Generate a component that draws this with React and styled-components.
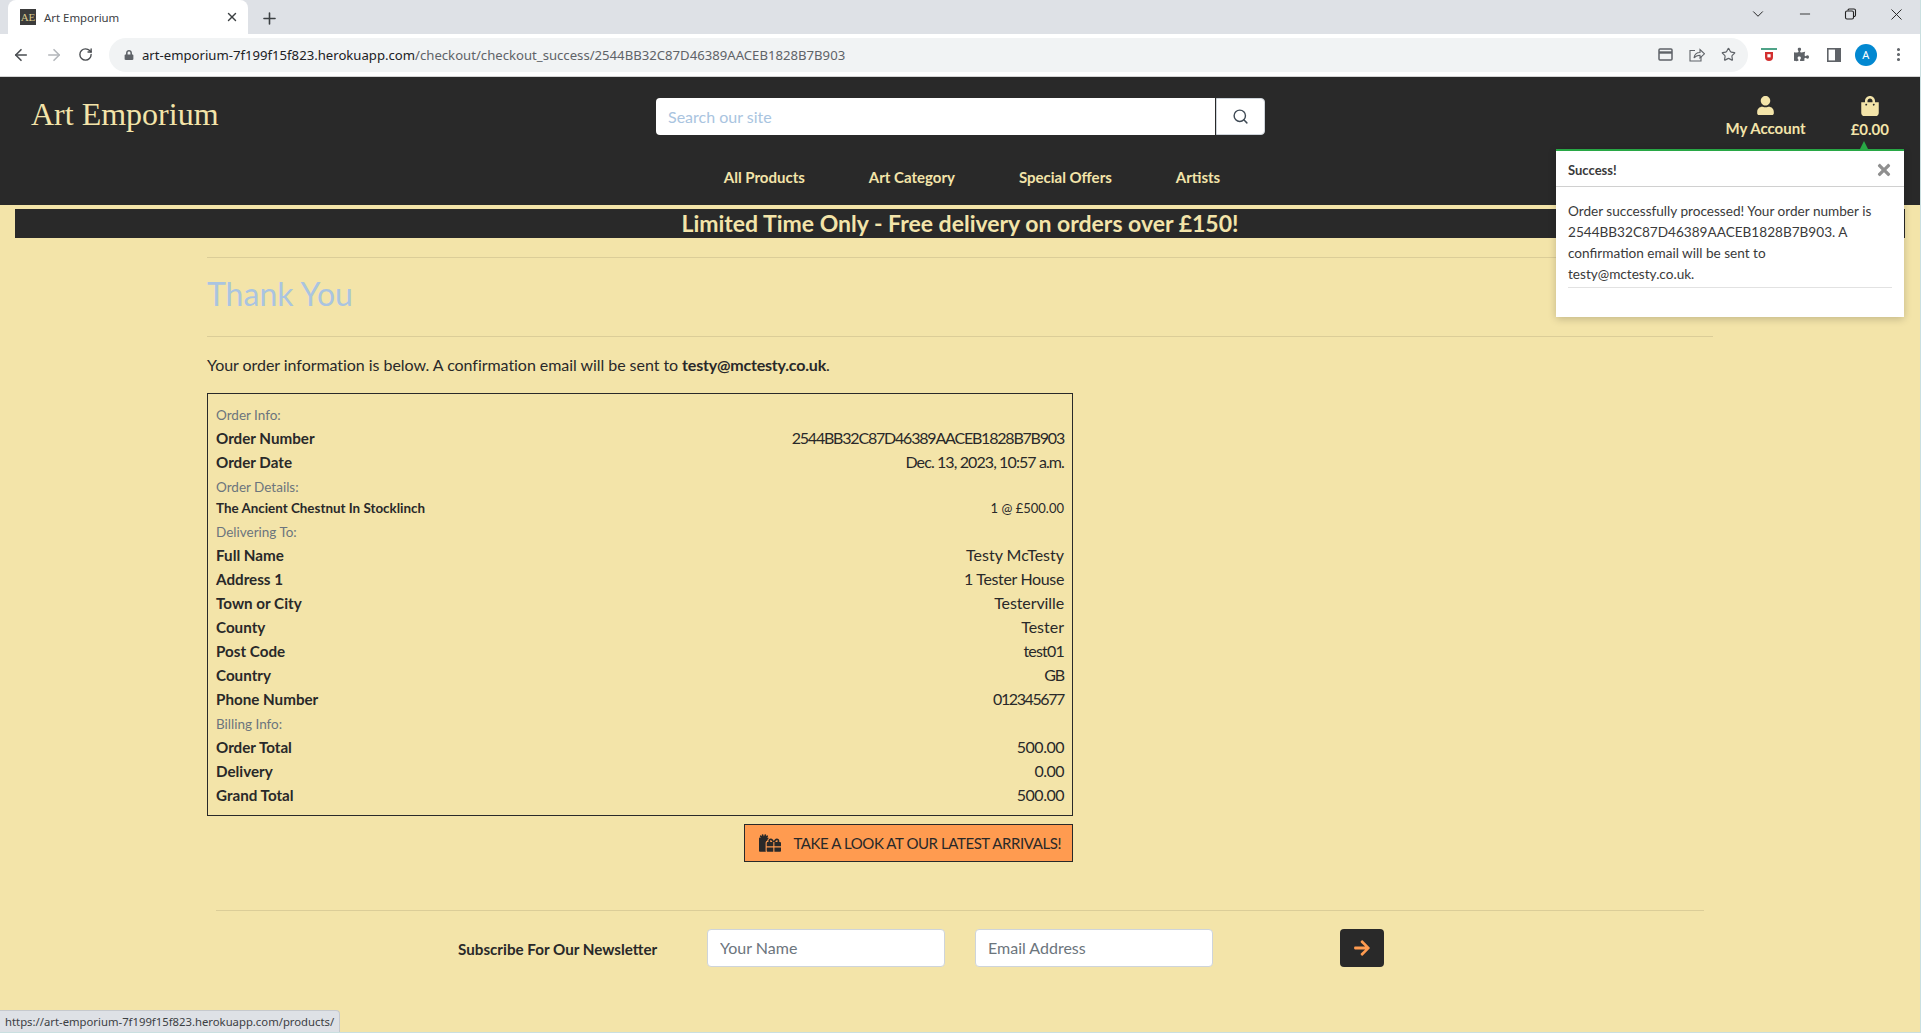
import React from 'react'
import styled, { createGlobalStyle } from 'styled-components'
import { FaUser, FaShoppingBag, FaGifts, FaArrowRight, FaPuzzlePiece, FaTimes, FaLock } from 'react-icons/fa'
import { ArrowLeft, ArrowRight, RotateCw, Plus, X, Star, ChevronDown, Minus, EllipsisVertical, Search } from 'lucide-react'

const cream = '#f3e4a9'
const dark = '#292929'
const font = `Lato, "Noto Sans", sans-serif`
const uiFont = `"Noto Sans", "Open Sans", sans-serif`

const orderInfo = [
  ['Order Number', '2544BB32C87D46389AACEB1828B7B903', -1.2],
  ['Order Date', 'Dec. 13, 2023, 10:57 a.m.', -0.9],
]
const delivery = [
  ['Full Name', 'Testy McTesty'],
  ['Address 1', '1 Tester House', -0.35],
  ['Town or City', 'Testerville', -0.1],
  ['County', 'Tester'],
  ['Post Code', 'test01', -0.8],
  ['Country', 'GB', -1.2],
  ['Phone Number', '012345677', -1.4],
]
const billing = [
  ['Order Total', '500.00', -0.5],
  ['Delivery', '0.00', -0.5],
  ['Grand Total', '500.00', -0.5],
]

const Rows = ({ items }) =>
  items.map(([label, value, tight]) => (
    <Row key={label}>
      <b>{label}</b>
      <Value $tight={tight}>{value}</Value>
    </Row>
  ))

const App = () => {
  return (
    <Page>
      <Global />
      <TabStrip>
        <Tab>
          <Favicon>AE</Favicon>
          <TabTitle>Art Emporium</TabTitle>
          <X size={14} strokeWidth={2.4} color="#3c4043" />
        </Tab>
        <NewTab><Plus size={19} strokeWidth={2} /></NewTab>
        <WindowControls>
          <ChevronDown size={18} strokeWidth={1.3} />
          <Minus size={16} strokeWidth={1.3} />
          <svg width="14" height="14" viewBox="0 0 14 14" fill="none" stroke="#222" strokeWidth="1.1">
            <rect x="2.5" y="4" width="8" height="8" rx="1.5" />
            <path d="M5 3.6 V3 a1.5 1.5 0 0 1 1.5-1 H11 a1.5 1.5 0 0 1 1.5 1.5 V8 a1.5 1.5 0 0 1-1.5 1.5" />
          </svg>
          <X size={19} strokeWidth={1.2} />
        </WindowControls>
      </TabStrip>

      <Toolbar>
        <NavIcons>
          <ArrowLeft size={18} color="#4a4d51" strokeWidth={2.2} />
          <ArrowRight size={18} color="#b4b7bb" strokeWidth={2.2} />
          <RotateCw size={15} color="#4a4d51" strokeWidth={2.2} />
        </NavIcons>
        <Omnibox>
          <FaLock size={10} color="#5f6368" />
          <Url>art-emporium-7f199f15f823.herokuapp.com<span>/checkout/checkout_success/2544BB32C87D46389AACEB1828B7B903</span></Url>
          <OmniIcons>
            <svg width="15" height="13" viewBox="0 0 15 13" fill="none" stroke="#5f6368" strokeWidth="1.5">
              <rect x="1" y="1" width="13" height="11" rx="1" />
              <path d="M1 4.5 H14" strokeWidth="2.4" />
            </svg>
            <svg width="16" height="15" viewBox="0 0 16 15" fill="none" stroke="#5f6368" strokeWidth="1.1">
              <path d="M6 3.5 H1 V14 H12 V10" />
              <path d="M5 11 C5.5 7.5 8 5.5 11 5.5 V2.5 L15.5 6.8 L11 11 V8.2 C8.5 8.2 6.5 9 5 11 Z" />
            </svg>
            <Star size={15} color="#5f6368" strokeWidth={1.9} />
          </OmniIcons>
        </Omnibox>
        <Extensions>
          <ExtIcon>
            <svg width="16" height="14" viewBox="0 0 16 14">
              <rect x="0" y="0" width="16" height="2" fill="#4fa388" />
              <path d="M4 4 H12 V9 a4 4 0 0 1-8 0 Z" fill="#d32f2f" />
              <rect x="6.4" y="6.2" width="3.2" height="3.2" fill="#fff" />
            </svg>
          </ExtIcon>
          <ExtIcon><FaPuzzlePiece size={15} color="#5f6368" /></ExtIcon>
          <ExtIcon>
            <svg width="14" height="14" viewBox="0 0 14 14">
              <rect x="0.8" y="0.8" width="12.4" height="12.4" fill="none" stroke="#5f6368" strokeWidth="1.6" />
              <rect x="8" y="1" width="5" height="12" fill="#5f6368" />
            </svg>
          </ExtIcon>
          <Avatar>A</Avatar>
          <ExtIcon><EllipsisVertical size={17} color="#5f6368" strokeWidth={2.4} /></ExtIcon>
        </Extensions>
      </Toolbar>

      <Header>
        <TopRow>
          <Logo>Art Emporium</Logo>
          <SearchBox>
            <SearchInput placeholder="Search our site" />
            <SearchButton><Search size={17} color="#3f4a55" strokeWidth={2} /></SearchButton>
          </SearchBox>
          <AccountLinks>
            <AccountLink><FaUser size={19} /><span>My Account</span></AccountLink>
            <AccountLink><FaShoppingBag size={20} /><span>£0.00</span></AccountLink>
          </AccountLinks>
        </TopRow>
        <MainNav>
          <a>All Products</a>
          <a>Art Category</a>
          <a>Special Offers</a>
          <a>Artists</a>
        </MainNav>
      </Header>

      <Banner>Limited Time Only - Free delivery on orders over £150!</Banner>

      <Main>
        <Rule />
        <Title>Thank You</Title>
        <Rule />
        <Intro>Your order information is below. A confirmation email will be sent to <b>testy@mctesty.co.uk</b>.</Intro>

        <OrderBox>
          <Section>Order Info:</Section>
          <Rows items={orderInfo} />
          <Section>Order Details:</Section>
          <ItemRow>
            <b>The Ancient Chestnut In Stocklinch</b>
            <span>1 @ £500.00</span>
          </ItemRow>
          <Section>Delivering To:</Section>
          <Rows items={delivery} />
          <Section>Billing Info:</Section>
          <Rows items={billing} />
        </OrderBox>

        <ArrivalsRow>
          <ArrivalsButton>
            <FaGifts size={22} />
            TAKE A LOOK AT OUR LATEST ARRIVALS!
          </ArrivalsButton>
        </ArrivalsRow>
      </Main>

      <Newsletter>
        <NewsLabel>Subscribe For Our Newsletter</NewsLabel>
        <NewsInput placeholder="Your Name" />
        <NewsInput placeholder="Email Address" />
        <NewsButton><FaArrowRight size={18} /></NewsButton>
      </Newsletter>

      <Toast>
        <ToastArrow />
        <ToastHead>
          <strong>Success!</strong>
          <FaTimes size={18} color="#8f8f8f" />
        </ToastHead>
        <ToastBody>
          <p>Order successfully processed! Your order number is 2544BB32C87D46389AACEB1828B7B903. A confirmation email will be sent to testy@mctesty.co.uk.</p>
        </ToastBody>
      </Toast>

      <StatusBubble>https://art-emporium-7f199f15f823.herokuapp.com/products/</StatusBubble>
    </Page>
  )
}

export default App

const Global = createGlobalStyle`
html, body {
  margin: 0;
  padding: 0;
  overflow: hidden;
  background: #c9dfe0;
}
* { box-sizing: border-box; }
`

const Page = styled.div`
position: relative;
width: 1920px;
height: 1032px;
overflow: hidden;
background: ${cream};
color: ${dark};
font-family: ${font};
`

const TabStrip = styled.div`
display: flex;
align-items: flex-end;
height: 34px;
padding-left: 8px;
background: #dee1e6;
font-family: ${uiFont};
`
const Tab = styled.div`
display: flex;
align-items: center;
width: 240px;
height: 34px;
padding: 0 9px 0 12px;
background: #fff;
border-radius: 8px 8px 0 0;
`
const Favicon = styled.div`
width: 16px;
height: 16px;
background: #3b3b3b;
color: #d8c88a;
font: 11px "Liberation Serif", serif;
line-height: 16px;
text-align: center;
`
const TabTitle = styled.span`
flex: 1;
margin-left: 8px;
font-size: 11.4px;
color: #3c4043;
`
const NewTab = styled.div`
display: flex;
align-items: center;
margin: 0 0 6px 12px;
color: #3c4043;
`
const WindowControls = styled.div`
display: flex;
align-items: center;
justify-content: space-between;
width: 157px;
height: 28px;
margin-left: auto;
margin-right: 14px;
align-self: flex-start;
color: #222;
`

const Toolbar = styled.div`
display: flex;
align-items: center;
height: 43px;
padding-bottom: 1px;
background: #fff;
border-bottom: 1px solid #d4d4d4;
font-family: ${uiFont};
`
const NavIcons = styled.div`
display: flex;
align-items: center;
justify-content: space-between;
width: 81px;
margin-left: 12px;
margin-right: 16px;
`
const Omnibox = styled.div`
display: flex;
align-items: center;
width: 1639px;
height: 34px;
padding: 0 12px 0 15px;
background: #f1f3f4;
border-radius: 17px;
`
const Url = styled.div`
flex: 1;
margin-left: 8px;
font-size: 13.15px;
color: #202124;
span { color: #5f6368; }
`
const OmniIcons = styled.div`
display: flex;
align-items: center;
gap: 16px;
`
const Extensions = styled.div`
display: flex;
align-items: center;
gap: 10.25px;
margin-left: 10px;
`
const ExtIcon = styled.div`
display: flex;
align-items: center;
justify-content: center;
width: 22px;
`
const Avatar = styled.div`
width: 22px;
height: 22px;
border-radius: 50%;
background: #0288d1;
color: #fff;
font-size: 11px;
line-height: 22px;
text-align: center;
`

const Header = styled.header`
height: 128px;
background: ${dark};
color: ${cream};
`
const TopRow = styled.div`
display: grid;
grid-template-columns: 656px 609px 1fr;
height: 83px;
`
const Logo = styled.div`
padding: 17px 0 0 31px;
font: 32px/40px "Liberation Serif", serif;
`
const SearchBox = styled.div`
display: flex;
height: 37px;
margin-top: 21px;
`
const SearchInput = styled.input`
flex: 1;
min-width: 0;
padding: 0 12px;
border: none;
border-radius: 4px 0 0 4px;
background: #fff;
font: 16px ${font};
&::placeholder { color: #a9c4e0; }
`
const SearchButton = styled.button`
display: flex;
align-items: center;
justify-content: center;
width: 49px;
margin-left: 1px;
border: 1px solid #ced4da;
border-radius: 0 4px 4px 0;
background: #fff;
`
const AccountLinks = styled.div`
display: flex;
justify-content: flex-end;
gap: 45px;
padding: 19px 31px 0 0;
`
const AccountLink = styled.div`
display: flex;
flex-direction: column;
align-items: center;
gap: 1px;
font-size: 15px;
font-weight: 700;
line-height: 24px;
`
const MainNav = styled.nav`
display: flex;
justify-content: center;
gap: 64px;
padding: 5px 0 0 24px;
font-size: 15px;
font-weight: 700;
line-height: 24px;
`

const Banner = styled.div`
height: 29px;
margin: 4px 15px 0;
background: ${dark};
color: ${cream};
font-size: 23px;
font-weight: 700;
line-height: 29px;
text-align: center;
`

const Main = styled.main`
width: 1506px;
margin-left: 207px;
padding-top: 19px;
`
const Rule = styled.hr`
height: 1px;
margin: 0;
border: none;
background: #dbcd98;
`
const Title = styled.h2`
height: 78px;
margin: 0;
color: #aac4e0;
font-size: 32px;
font-weight: 400;
line-height: 72px;
`
const Intro = styled.p`
height: 56px;
margin: 0;
padding-top: 16px;
font-size: 16px;
letter-spacing: -0.05px;
line-height: 24px;
b { font-weight: 700; letter-spacing: -0.2px; }
`
const OrderBox = styled.section`
width: 866px;
height: 423px;
padding: 8px 8px 0;
border: 1px solid ${dark};
`
const Row = styled.div`
display: flex;
justify-content: space-between;
height: 24px;
font-size: 16px;
line-height: 24px;
b { font-size: 15.2px; font-weight: 700; }
`
const Value = styled.span`
letter-spacing: ${props => props.$tight || 0}px;
`
const ItemRow = styled(Row)`
height: 21px;
font-size: 13px;
line-height: 21px;
b { font-size: 13.4px; }
`
const Section = styled.div`
height: 24px;
color: #6c757d;
font-size: 13.5px;
line-height: 26px;
`
const ArrivalsRow = styled.div`
display: flex;
justify-content: flex-end;
width: 866px;
margin-top: 8px;
`
const ArrivalsButton = styled.button`
display: flex;
align-items: center;
justify-content: space-between;
width: 329px;
height: 38px;
padding: 0 11px 0 14px;
border: 1px solid ${dark};
background: #ff9b50;
color: ${dark};
font: 15px ${font};
letter-spacing: -0.42px;
white-space: nowrap;
svg { flex-shrink: 0; }
`

const Newsletter = styled.div`
display: flex;
align-items: center;
width: 1488px;
height: 83px;
margin: 48px 0 0 216px;
padding: 0 0 9px 242px;
border-top: 1px solid #dbcd98;
`
const NewsLabel = styled.div`
width: 249px;
padding-top: 3px;
font-size: 15.2px;
font-weight: 700;
`
const NewsInput = styled.input`
width: 238px;
height: 38px;
margin-right: 30px;
padding: 0 12px;
border: 1px solid #ced4da;
border-radius: 4px;
background: #fff;
font: 16px ${font};
&::placeholder { color: #6c757d; }
`
const NewsButton = styled.button`
display: flex;
align-items: center;
justify-content: center;
width: 44px;
height: 38px;
margin-left: 97px;
border: none;
border-radius: 4px;
background: ${dark};
color: #ff9b50;
`

const Toast = styled.div`
position: absolute;
top: 149px;
left: 1556px;
width: 348px;
height: 168px;
background: #fff;
border-top: 2px solid #28a745;
box-shadow: 0 2px 8px rgba(0, 0, 0, 0.2);
color: #3a3a3a;
`
const ToastArrow = styled.div`
position: absolute;
top: -10px;
left: 304px;
border-left: 4px solid transparent;
border-right: 4px solid transparent;
border-bottom: 8px solid #28a745;
`
const ToastHead = styled.div`
display: flex;
align-items: center;
justify-content: space-between;
height: 36px;
padding: 3px 11px 0 12px;
border-bottom: 1px solid #d0d0d0;
font-size: 13px;
strong { font-weight: 700; }
`
const ToastBody = styled.div`
padding: 14px 12px 0;
font-size: 13.6px;
line-height: 21px;
p {
  margin: 0;
  padding-bottom: 2px;
  border-bottom: 1px solid #e2e2e2;
}
`
const StatusBubble = styled.div`
position: absolute;
left: 0;
bottom: 0;
height: 22px;
padding: 0 5px;
background: #dee1e6;
border-radius: 0 4px 0 0;
border: 1px solid #c6c9ce;
border-left: none;
border-bottom: none;
color: #3c4043;
font-size: 11.3px;
line-height: 21px;
font-family: ${uiFont};
`
